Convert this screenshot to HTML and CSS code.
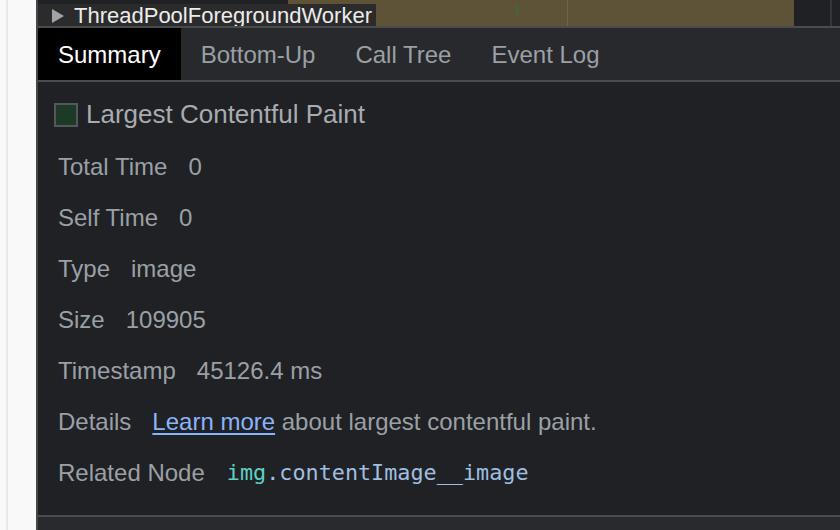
FILE: index.html
```html
<!DOCTYPE html>
<html>
<head>
<meta charset="utf-8">
<link rel="stylesheet" href="styles.css">
</head>
<body>
<div class="page">
  <div class="side"><div class="side-line"></div></div>
  <div class="panel">
    <div class="track">
      <div class="bar"></div>
      <div class="bar-line"></div>
      <div class="tick"></div>
      <div class="track-right"></div>
      <div class="track-label"><span class="tri"></span>ThreadPoolForegroundWorker</div>
    </div>
    <div class="tabs">
      <div class="tab active">Summary</div>
      <div class="tab">Bottom-Up</div>
      <div class="tab">Call Tree</div>
      <div class="tab">Event Log</div>
    </div>
    <div class="content">
      <div class="title"><span class="swatch"></span>Largest Contentful Paint</div>
      <div class="row"><span class="label">Total Time</span><span class="value">0</span></div>
      <div class="row"><span class="label">Self Time</span><span class="value">0</span></div>
      <div class="row"><span class="label">Type</span><span class="value">image</span></div>
      <div class="row"><span class="label">Size</span><span class="value">109905</span></div>
      <div class="row"><span class="label">Timestamp</span><span class="value">45126.4 ms</span></div>
      <div class="row"><span class="label">Details</span><span class="value"><a class="link" href="#">Learn more</a> about largest contentful paint.</span></div>
      <div class="row"><span class="label">Related Node</span><span class="value mono"><span class="tag">img</span><span class="cls">.contentImage__image</span></span></div>
    </div>
    <div class="footer"></div>
  </div>
</div>
</body>
</html>
```
FILE: styles.css
```css
html, body {
  margin: 0;
  padding: 0;
  height: 100%;
  overflow: hidden;
}
body {
  font-family: "Liberation Sans", Arial, Helvetica, sans-serif;
  background: #202124;
}
.page {
  display: flex;
  height: 530px;
}
.side {
  width: 36px;
  flex: none;
  background: #f9f9fa;
  position: relative;
}
.side-line {
  position: absolute;
  left: 6px;
  top: 0;
  bottom: 0;
  width: 2px;
  background: #e8e8ea;
}
.panel {
  flex: 1;
  display: flex;
  flex-direction: column;
  border-left: 2px solid #46474b;
  background: #202124;
  min-width: 0;
}
.track {
  height: 26px;
  flex: none;
  position: relative;
  background: #202124;
  border-bottom: 2px solid #494b4f;
  overflow: hidden;
}
.bar {
  position: absolute;
  left: 250px;
  width: 506px;
  top: 0;
  bottom: 0;
  background: #5e5337;
}
.bar-line {
  position: absolute;
  left: 529px;
  width: 1px;
  top: 0;
  bottom: 0;
  background: #6f6448;
}
.tick {
  position: absolute;
  left: 478px;
  width: 2px;
  top: 5px;
  height: 10px;
  background: #3d6a3a;
}
.track-right {
  position: absolute;
  left: 792px;
  width: 2px;
  top: 0;
  bottom: 0;
  background: #36373a;
}
.track-label {
  position: absolute;
  left: 0;
  top: 4px;
  width: 338px;
  height: 30px;
  background: #2b2b2c;
  color: #ececec;
  font-size: 22px;
  line-height: 24px;
  padding-left: 14px;
  box-sizing: border-box;
  display: flex;
  align-items: flex-start;
  white-space: nowrap;
}
.tri {
  width: 0;
  height: 0;
  border-top: 7px solid transparent;
  border-bottom: 7px solid transparent;
  border-left: 12px solid #a0a3a8;
  margin-top: 5px;
  margin-right: 10px;
}
.tabs {
  height: 52px;
  flex: none;
  display: flex;
  background: #28292c;
  border-bottom: 2px solid #4a4c50;
}
.tab {
  padding: 2px 20px 0;
  font-size: 24px;
  line-height: 50px;
  color: #9aa0a6;
  white-space: nowrap;
}
.tab.active {
  background: #000000;
  color: #ffffff;
}
.content {
  height: 433px;
  flex: none;
  box-sizing: border-box;
  padding-top: 6px;
  background: #202124;
}
.title {
  height: 53px;
  display: flex;
  align-items: center;
  padding-left: 16px;
  font-size: 26px;
  color: #a8abb0;
}
.swatch {
  width: 20px;
  height: 20px;
  background: #1d3a27;
  border: 2px solid #54575b;
  margin-right: 8px;
  flex: none;
}
.row {
  height: 51px;
  display: flex;
  align-items: center;
  padding-left: 20px;
  font-size: 24px;
  color: #9aa0a6;
  white-space: nowrap;
}
.label {
  margin-right: 21px;
}
.value {
  color: #9aa0a6;
}
.link {
  color: #8ab4f8;
  text-decoration: underline;
  text-underline-offset: 3px;
}
.mono {
  font-family: "DejaVu Sans Mono", "Liberation Mono", monospace;
  font-size: 21.8px;
  margin-left: 1px;
}
.tag {
  color: #5bd1c4;
}
.cls {
  color: #9fbfe0;
}
.footer {
  flex: 1;
  background: #292a2d;
  border-top: 2px solid #4a4c50;
}
```
